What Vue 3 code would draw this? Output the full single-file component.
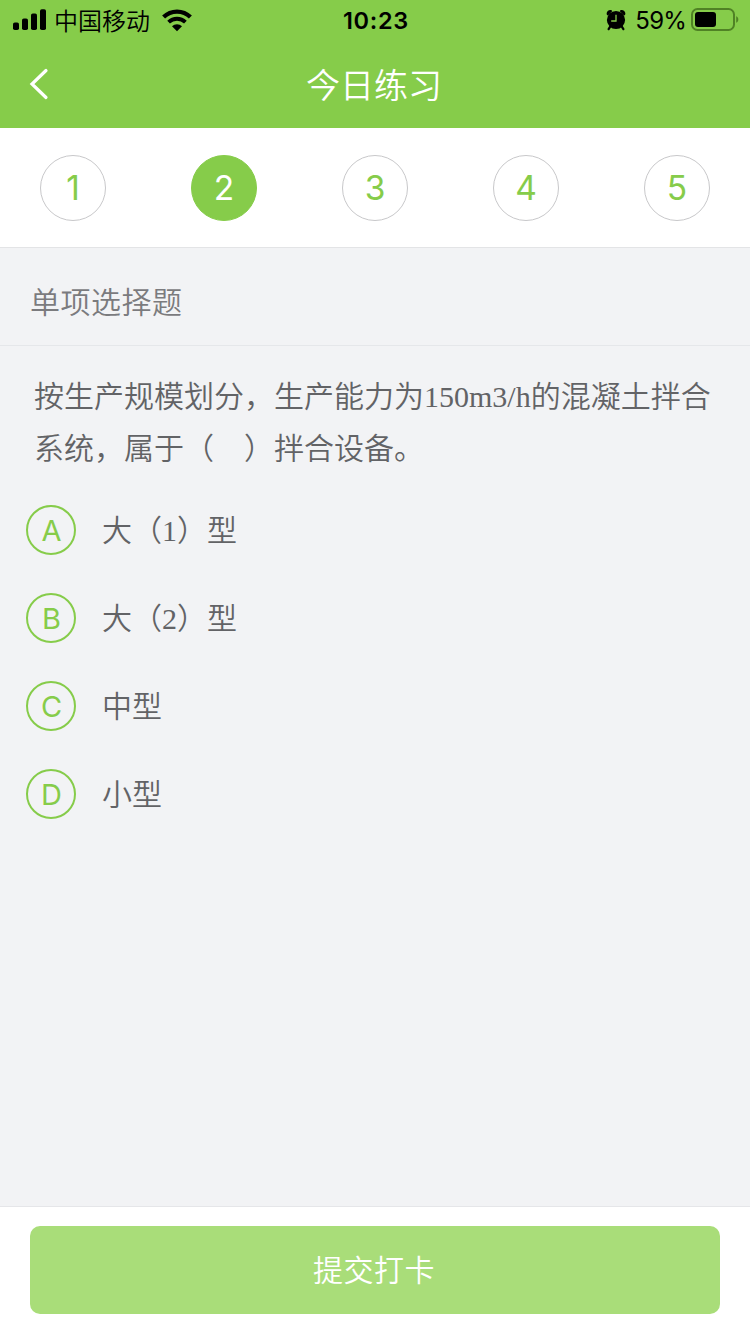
<script setup>
import { ref } from 'vue'

const current = ref(2)
const questions = [1, 2, 3, 4, 5]
const options = [
  { key: 'A', text: '大（1）型' },
  { key: 'B', text: '大（2）型' },
  { key: 'C', text: '中型' },
  { key: 'D', text: '小型' },
]
</script>

<template>
  <div class="page">
    <header class="header">
      <div class="status">
        <div class="status-left">
          <svg class="signal" width="34" height="22" viewBox="0 0 34 22">
            <rect x="0" y="13.5" width="6" height="7.5" rx="1.8" />
            <rect x="9" y="9.5" width="6" height="11.5" rx="1.8" />
            <rect x="18" y="4.5" width="6" height="16.5" rx="1.8" />
            <rect x="27" y="0.3" width="6" height="20.7" rx="1.8" />
          </svg>
          <span class="carrier">中国移动</span>
          <svg class="wifi" width="30" height="23" viewBox="0 0 30 23">
            <path d="M1.6 8.1a19 19 0 0 1 26.8 0" fill="none" stroke="#000" stroke-width="4.2" />
            <path d="M6.6 13.2a11.9 11.9 0 0 1 16.8 0" fill="none" stroke="#000" stroke-width="3.8" />
            <path d="M15 22.2L10 17.2a7.1 7.1 0 0 1 10 0z" />
          </svg>
        </div>
        <span class="clock">10:23</span>
        <div class="status-right">
          <svg class="alarm" width="20" height="22" viewBox="0 0 20 22">
            <circle cx="10" cy="11" r="9.1" />
            <path d="M1 6C-.4 3.200 2.600.2 5.600 1.200L6.200 2.200L2 6.500zM19 6c1.400-2.800-1.600-5.800-4.600-4.800L13.800 2.200L18 6.500z" />
            <path d="M4.200 17.600L2.600 20.200M15.800 17.600L17.400 20.200" stroke="#000" stroke-width="2.200" stroke-linecap="round" />
            <path d="M10 5.800v6.200H5.200" fill="none" stroke="#86cc4a" stroke-width="1.300" />
          </svg>
          <span class="percent">59%</span>
          <svg class="battery" width="48" height="24" viewBox="0 0 48 24">
            <rect x="1" y="1" width="42" height="21" rx="5.500" fill="none" stroke="#508225" stroke-width="2" />
            <rect x="4" y="4" width="21" height="15" rx="3" />
            <path d="M45.200 8.200c2.800 1 2.800 5.600 0 6.600z" fill="#508225" />
          </svg>
        </div>
      </div>
      <div class="nav">
        <svg class="back" width="22" height="34" viewBox="0 0 22 34">
          <path d="M18 3.500L4 17L18 30.500" fill="none" stroke="#fff" stroke-width="3.200" stroke-linecap="round" />
        </svg>
        <h1 class="title">今日练习</h1>
      </div>
    </header>

    <nav class="steps">
      <button
        v-for="n in questions"
        :key="n"
        class="step"
        :class="{ active: n === current }"
        @click="current = n"
      >{{ n }}</button>
    </nav>

    <div class="kind">单项选择题</div>

    <main class="question">
      <p class="stem">按生产规模划分，生产能力为150m3/h的混凝土拌合系统，属于（&#x3000;）拌合设备。</p>
      <ul class="options">
        <li v-for="o in options" :key="o.key" class="option">
          <span class="badge">{{ o.key }}</span>
          <span class="label">{{ o.text }}</span>
        </li>
      </ul>
    </main>

    <footer class="footer">
      <button class="submit">提交打卡</button>
    </footer>
  </div>
</template>

<style>
body {
  margin: 0;
}
</style>

<style scoped>
.page {
  display: flex;
  flex-direction: column;
  width: 750px;
  height: 1334px;
  overflow: hidden;
  background: #f2f3f5;
  font-family: Inter, "Noto Sans CJK SC", sans-serif;
  font-weight: 350;
}
button {
  padding: 0;
  font-family: inherit;
  font-weight: inherit;
}
.header {
  flex: none;
  height: 128px;
  background: #86cc4a;
}
.status {
  display: grid;
  grid-template-columns: 1fr auto 1fr;
  align-items: center;
  height: 40px;
  padding: 0 11px 0 13px;
  color: #000;
}
.status-left,
.status-right {
  display: flex;
  align-items: center;
}
.status-right {
  justify-content: flex-end;
}
.carrier {
  margin: 3px 12px 0 7px;
  font-size: 24px;
  line-height: 37px;
}
.clock {
  margin-top: 1px;
  font-size: 23.5px;
  font-weight: 600;
  letter-spacing: 0.7px;
}
.percent {
  margin: 1px 5px 0 9px;
  font-size: 24px;
  font-weight: 400;
  letter-spacing: -0.8px;
}
.nav {
  display: grid;
  grid-template-columns: 60px 1fr 60px;
  align-items: center;
  height: 88px;
}
.back {
  margin-left: 28px;
}
.title {
  margin: 3px 2px 0 0;
  color: #fff;
  font-size: 34px;
  line-height: 48px;
  font-weight: inherit;
  text-align: center;
}
.steps {
  flex: none;
  display: flex;
  justify-content: space-between;
  align-items: center;
  box-sizing: border-box;
  height: 120px;
  padding: 0 40px;
  background: #fff;
  border-bottom: 1px solid #e3e4e6;
}
.step {
  box-sizing: border-box;
  width: 66px;
  height: 66px;
  border: 1px solid #c8c8ca;
  border-radius: 50%;
  background: #fff;
  color: #86cc4a;
  font-size: 33.5px;
  font-weight: 400;
  line-height: 65px;
}
.step.active {
  border-color: #86cc4a;
  background: #86cc4a;
  color: #fff;
}
.kind {
  flex: none;
  box-sizing: border-box;
  height: 98px;
  padding-left: 30px;
  border-bottom: 1px solid #e5e7ea;
  color: #7b7b7e;
  font-size: 30px;
  letter-spacing: 0.5px;
  line-height: 109px;
}
.question {
  flex: 1;
  padding: 25px 34px 0;
  color: #626366;
  font-family: "Liberation Serif", "Noto Sans CJK SC", serif;
}
.stem {
  margin: 0 -6px 0 0;
  font-size: 30px;
  line-height: 52px;
}
.options {
  display: flex;
  flex-direction: column;
  gap: 38px;
  margin: 30px 0 0 -8px;
  padding: 0;
  list-style: none;
}
.option {
  display: flex;
  align-items: center;
  height: 50px;
}
.badge {
  box-sizing: border-box;
  width: 50px;
  height: 50px;
  margin-right: 26px;
  padding-left: 1px;
  border: 2px solid #86cc4a;
  border-radius: 50%;
  color: #86cc4a;
  font-family: Inter, sans-serif;
  font-size: 29px;
  font-weight: 400;
  line-height: 48px;
  text-align: center;
}
.label {
  margin-top: 2px;
  font-size: 30px;
  line-height: 50px;
}
.footer {
  flex: none;
  box-sizing: border-box;
  height: 128px;
  padding: 19px 30px 20px;
  border-top: 1px solid #e5e6e9;
  background: #fff;
}
.submit {
  display: block;
  width: 100%;
  height: 88px;
  padding-right: 2px;
  border: 0;
  border-radius: 10px;
  background: #a9dd79;
  color: #fff;
  font-size: 30px;
  letter-spacing: 0.5px;
  line-height: 89px;
}
</style>
